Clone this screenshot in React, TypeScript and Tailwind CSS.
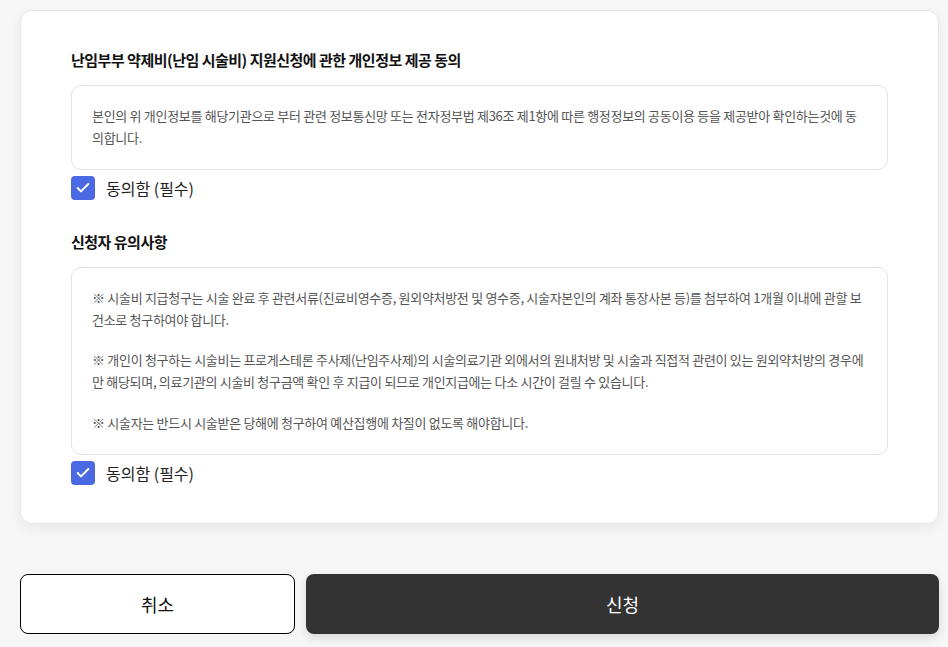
import { Check } from 'lucide-react';

const font = { fontFamily: '"Noto Sans CJK KR", "Noto Sans", sans-serif' };

type AgreeProps = {
    title: string;
    children: React.ReactNode;
    className?: string;
};

function AgreeSection({ title, children, className }: AgreeProps) {
    return (
        <section className={className}>
            <h3 className="text-[15px] font-bold leading-[22px] tracking-[-0.5px] text-[#111]">{title}</h3>
            <div className="mt-[14px] rounded-[10px] border border-[#e3e3e3] px-5 pt-[19px] pb-5 text-[13px] leading-[22px] tracking-[-0.3px] text-[#555]">
                {children}
            </div>
            <label className="mt-[6px] flex items-center gap-[11px]">
                <span className="flex h-6 w-6 items-center justify-center rounded-[4px] bg-[#4a69e2]">
                    <Check className="h-4 w-4 text-white" strokeWidth={3} />
                </span>
                <span className="text-[16px] leading-6 text-[#222]">동의함 (필수)</span>
            </label>
        </section>
    );
}

export default function App() {
    return (
        <div style={font} className="min-h-[647px] bg-[#f6f6f6] pt-[10px] pl-5 pr-[9px]">
            <div className="rounded-xl border border-[#e6e6e6] bg-white px-[50px] pt-[38px] pb-[38px] shadow-[0_4px_12px_rgba(0,0,0,0.06)]">
                <AgreeSection title="난임부부 약제비(난임 시술비) 지원신청에 관한 개인정보 제공 동의">
                    <p>
                        본인의 위 개인정보를 해당기관으로 부터 관련 정보통신망 또는 전자정부법 제36조 제1항에 따른 행정정보의 공동이용 등을 제공받아 확인하는것에 동의합니다.
                    </p>
                </AgreeSection>
                <AgreeSection title="신청자 유의사항" className="mt-[31px]">
                    <p>
                        ※ 시술비 지급청구는 시술 완료 후 관련서류(진료비영수증, 원외약처방전 및 영수증, 시술자본인의 계좌 통장사본 등)를 첨부하여 1개월 이내에 관할 보건소로 청구하여야 합니다.
                    </p>
                    <p className="mt-[18px]">
                        ※ 개인이 청구하는 시술비는 프로게스테론 주사제(난임주사제)의 시술의료기관 외에서의 원내처방 및 시술과 직접적 관련이 있는 원외약처방의 경우에만 해당되며, 의료기관의 시술비 청구금액 확인 후 지급이 되므로 개인지급에는 다소 시간이 걸릴 수 있습니다.
                    </p>
                    <p className="mt-[19px]">
                        ※ 시술자는 반드시 시술받은 당해에 청구하여 예산집행에 차질이 없도록 해야합니다.
                    </p>
                </AgreeSection>
            </div>

            <div className="mt-[50px] flex gap-[11px]">
                <button className="h-[60px] w-[275px] rounded-lg border border-black bg-white text-[18px] text-[#111]">
                    취소
                </button>
                <button className="h-[60px] flex-1 rounded-lg bg-[#333] text-[18px] text-white shadow-[0_4px_10px_rgba(0,0,0,0.12)]">
                    신청
                </button>
            </div>
        </div>
    );
}
